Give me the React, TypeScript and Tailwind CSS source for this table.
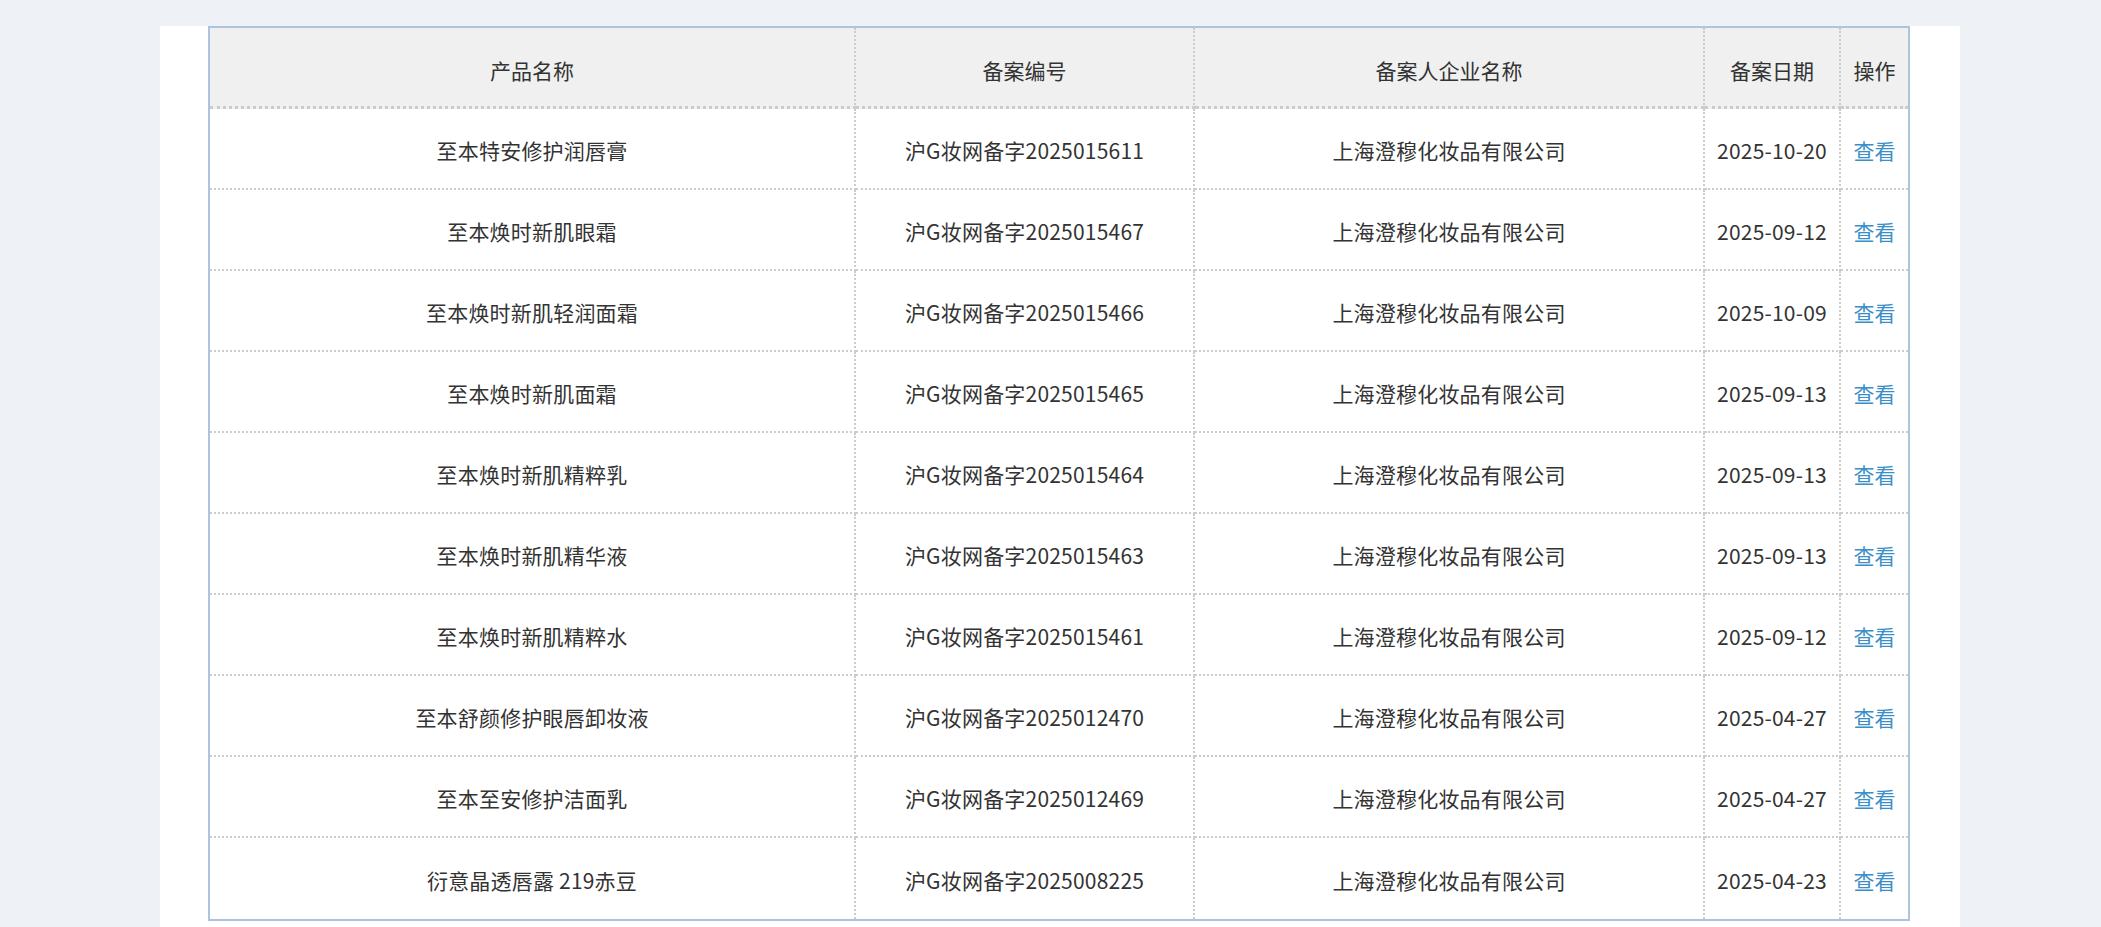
import React from "react";

const rows = [
  ["至本特安修护润唇膏", "沪G妆网备字2025015611", "2025-10-20"],
  ["至本焕时新肌眼霜", "沪G妆网备字2025015467", "2025-09-12"],
  ["至本焕时新肌轻润面霜", "沪G妆网备字2025015466", "2025-10-09"],
  ["至本焕时新肌面霜", "沪G妆网备字2025015465", "2025-09-13"],
  ["至本焕时新肌精粹乳", "沪G妆网备字2025015464", "2025-09-13"],
  ["至本焕时新肌精华液", "沪G妆网备字2025015463", "2025-09-13"],
  ["至本焕时新肌精粹水", "沪G妆网备字2025015461", "2025-09-12"],
  ["至本舒颜修护眼唇卸妆液", "沪G妆网备字2025012470", "2025-04-27"],
  ["至本至安修护洁面乳", "沪G妆网备字2025012469", "2025-04-27"],
  ["衍意晶透唇露 219赤豆", "沪G妆网备字2025008225", "2025-04-23"],
];

const company = "上海澄穆化妆品有限公司";

export default function App() {
  return (
    <div
      className="h-[927px] w-[2101px] overflow-hidden bg-[#eef2f7] text-[#333333]"
      style={{ fontFamily: '"Noto Sans CJK SC", "Noto Sans", sans-serif' }}
    >
      <div className="ml-[160px] mt-[26px] h-[901px] w-[1800px] bg-white pl-[48px]">
        <div className="w-[1702px] border-2 border-[#aec3de] text-[21px]">
          <div className="grid grid-cols-[646px_339px_510px_136px_67px]">
            {["产品名称", "备案编号", "备案人企业名称", "备案日期", "操作"].map((h, i) => (
              <div
                key={h}
                className={
                  "flex h-[81px] items-center justify-center whitespace-nowrap border-b-[3px] border-dotted border-[#cccccc] bg-[#f0f0f0] pt-[8px] " +
                  (i < 4 ? "border-r-2" : "")
                }
              >
                {h}
              </div>
            ))}
            {rows.map((r, ri) => {
              const last = ri === rows.length - 1;
              const cells = [r[0], r[1], company, r[2]];
              return (
                <React.Fragment key={ri}>
                  {cells.map((c, ci) => (
                    <div
                      key={ci}
                      className={
                        "flex h-[81px] items-center justify-center whitespace-nowrap border-r-2 border-dotted border-[#cccccc] pt-[4px] tracking-[0.2px] " +
                        (last ? "" : "border-b-2")
                      }
                    >
                      {c}
                    </div>
                  ))}
                  <div
                    className={
                      "flex h-[81px] items-center justify-center whitespace-nowrap border-dotted border-[#cccccc] pt-[4px] text-[#3b8fc8] " +
                      (last ? "" : "border-b-2")
                    }
                  >
                    查看
                  </div>
                </React.Fragment>
              );
            })}
          </div>
        </div>
      </div>
    </div>
  );
}
